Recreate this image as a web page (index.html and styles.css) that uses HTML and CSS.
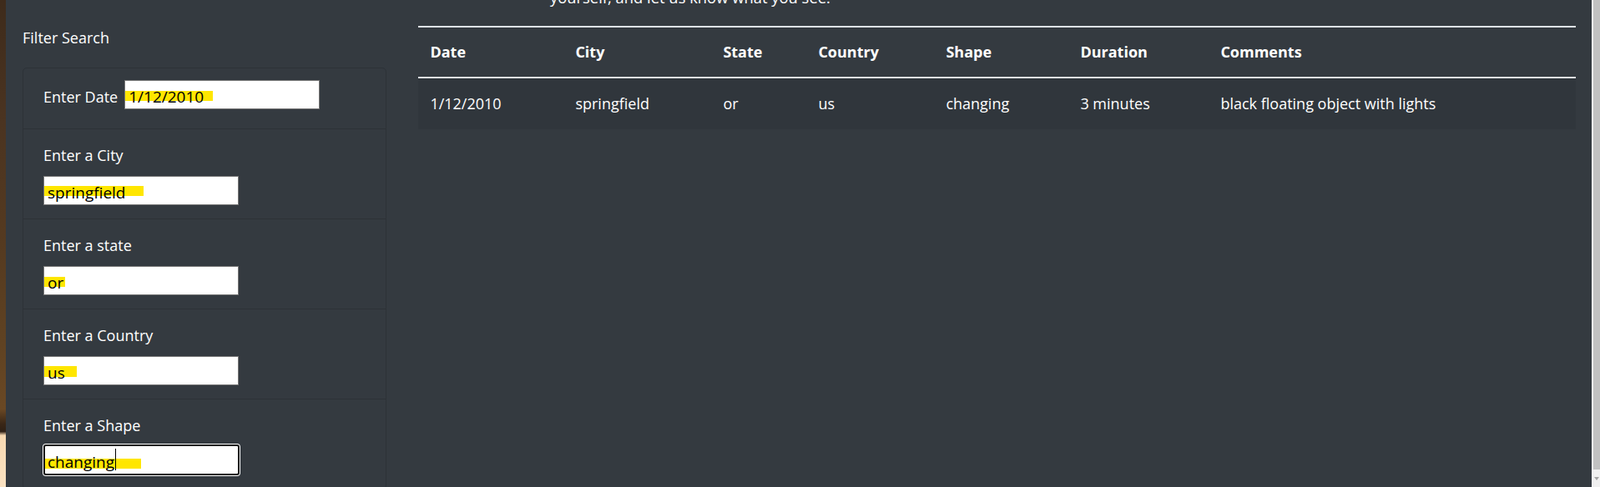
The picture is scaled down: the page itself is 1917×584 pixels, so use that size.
FILE: index.html
```html
<!DOCTYPE html>
<html lang="en">
<head>
<meta charset="utf-8">
<title>UFO Sightings</title>
<link rel="stylesheet" href="styles.css">
</head>
<body>
<div class="bg-strip"></div>
<div class="page">
  <aside class="sidebar">
    <h5 class="filter-title">Filter Search</h5>
    <ul class="list-group">
      <li class="list-item item-inline">
        <label class="field-label" for="datetime">Enter Date</label>
        <input id="datetime" class="field hl-date" type="text" value="1/12/2010">
      </li>
      <li class="list-item">
        <label class="field-label" for="city">Enter a City</label>
        <input id="city" class="field hl-city" type="text" value="springfield">
      </li>
      <li class="list-item">
        <label class="field-label" for="state">Enter a state</label>
        <input id="state" class="field hl-state" type="text" value="or">
      </li>
      <li class="list-item">
        <label class="field-label" for="country">Enter a Country</label>
        <input id="country" class="field hl-country" type="text" value="us">
      </li>
      <li class="list-item">
        <label class="field-label" for="shape">Enter a Shape</label>
        <span class="focus-wrap">
          <input id="shape" class="field field-focus hl-shape" type="text" value="changing">
          <span class="caret"></span>
        </span>
      </li>
    </ul>
  </aside>
  <main class="content">
    <p class="intro">yourself, and let us know what you see.</p>
    <table class="ufo-table">
      <thead>
        <tr>
          <th>Date</th>
          <th>City</th>
          <th>State</th>
          <th>Country</th>
          <th>Shape</th>
          <th>Duration</th>
          <th>Comments</th>
        </tr>
      </thead>
      <tbody>
        <tr>
          <td>1/12/2010</td>
          <td>springfield</td>
          <td>or</td>
          <td>us</td>
          <td>changing</td>
          <td>3 minutes</td>
          <td>black floating object with lights</td>
        </tr>
      </tbody>
    </table>
  </main>
</div>
<div class="scrollbar">
  <div class="scroll-thumb"></div>
  <div class="scroll-arrow"></div>
</div>
</body>
</html>
```

FILE: styles.css
```css
html, body {
  margin: 0;
  height: 584px;
  overflow: hidden;
}

body {
  display: flex;
  font-family: "Open Sans", "Noto Sans", sans-serif;
  font-size: 18px;
  line-height: 28.8px;
  color: #fff;
  background: #343a40;
}

.bg-strip {
  width: 7px;
  flex: none;
  background: linear-gradient(to bottom,
    #3e2b1b 0%, #4b3421 25%, #553a20 50%, #5f4222 70%, #6a4824 84%,
    #3a2717 87%, #2f2015 88.6%, #f7d9b2 89.4%, #fbe2c2 100%);
}

.page {
  flex: 1;
  display: flex;
  background: #343a40;
}

.sidebar {
  flex: none;
  width: 436px;
  padding: 0 19px 0 20px;
}

.filter-title {
  margin: 31px 0 21px;
  font-size: 18px;
  font-weight: 400;
  line-height: 28.8px;
}

.list-group {
  list-style: none;
  margin: 0;
  padding: 0;
  border: 1px solid rgba(0, 0, 0, 0.13);
  border-radius: 5px;
}

.list-item {
  padding: 14.4px 24px 15.8px;
  border-top: 1px solid rgba(0, 0, 0, 0.13);
}

.list-item:first-child {
  border-top: none;
}

.item-inline {
  display: flex;
  align-items: baseline;
  gap: 8px;
  padding-bottom: 23px;
}

.field-label {
  display: block;
  padding-top: 2px;
  margin-bottom: 11px;
}

.item-inline .field-label {
  padding-top: 0;
  margin-bottom: 0;
}

.field {
  display: block;
  box-sizing: border-box;
  width: 234px;
  height: 35px;
  margin: 0;
  padding: 4px 4px 0;
  border: 1px solid #767676;
  border-radius: 0;
  font-family: "Open Sans", "Noto Sans", sans-serif;
  font-size: 19px;
  color: #000;
  background: linear-gradient(#ffe600, #ffe600) no-repeat, #fff;
  background-size: 105px 12px;
  background-position: 0 12px;
  outline: none;
}

.hl-date { background-size: 105px 12px; background-position: 0 12px; }
.hl-city { background-size: 119px 12px; background-position: 0 11px; }
.hl-state { background-size: 25px 12px; background-position: 0 12px; }
.hl-country { background-size: 39px 13px; background-position: 0 11px; }
.hl-shape { background-size: 115px 12px; background-position: 0 15px; }

.focus-wrap {
  position: relative;
  display: block;
  width: 236px;
  margin-top: -2px;
}

.field-focus {
  width: 235px;
  height: 37px;
  border: 2px solid #101010;
  border-radius: 3px;
  box-shadow: 0 0 0 1px #fff;
  padding: 4px 3px 0;
}

.caret {
  position: absolute;
  left: 86px;
  top: 5px;
  width: 1px;
  height: 26px;
  background: #000;
}

.content {
  flex: 1;
  padding: 0 19px;
  min-width: 0;
}

.intro {
  margin: -17px 0 19.5px;
  padding-left: 158px;
  font-size: 18.4px;
}

.ufo-table {
  width: 100%;
  table-layout: fixed;
  border-collapse: collapse;
}

.ufo-table th,
.ufo-table td {
  box-sizing: border-box;
  padding: 14.4px;
  text-align: left;
  vertical-align: top;
}

.ufo-table th {
  padding-bottom: 15.8px;
}

.ufo-table td {
  padding-top: 16px;
  padding-bottom: 16px;
}

.ufo-table thead th {
  font-weight: 700;
  border-top: 2px solid #dee2e6;
  border-bottom: 2px solid #dee2e6;
}

.ufo-table tbody tr {
  background: rgba(0, 0, 0, 0.06);
}

.ufo-table th:nth-child(1) { width: 174px; }
.ufo-table th:nth-child(2) { width: 177px; }
.ufo-table th:nth-child(3) { width: 114px; }
.ufo-table th:nth-child(4) { width: 153px; }
.ufo-table th:nth-child(5) { width: 161px; }
.ufo-table th:nth-child(6) { width: 168px; }

.scrollbar {
  flex: none;
  width: 10px;
  display: flex;
  flex-direction: column;
  background: #f0f0f0;
}

.scroll-thumb {
  height: 563px;
  margin-left: 2px;
  background: #c1c1c1;
}

.scroll-arrow {
  width: 0;
  height: 0;
  margin: 9px 0 0 3px;
  border-left: 3px solid transparent;
  border-right: 3px solid transparent;
  border-top: 4px solid #a3a3a3;
}
```
